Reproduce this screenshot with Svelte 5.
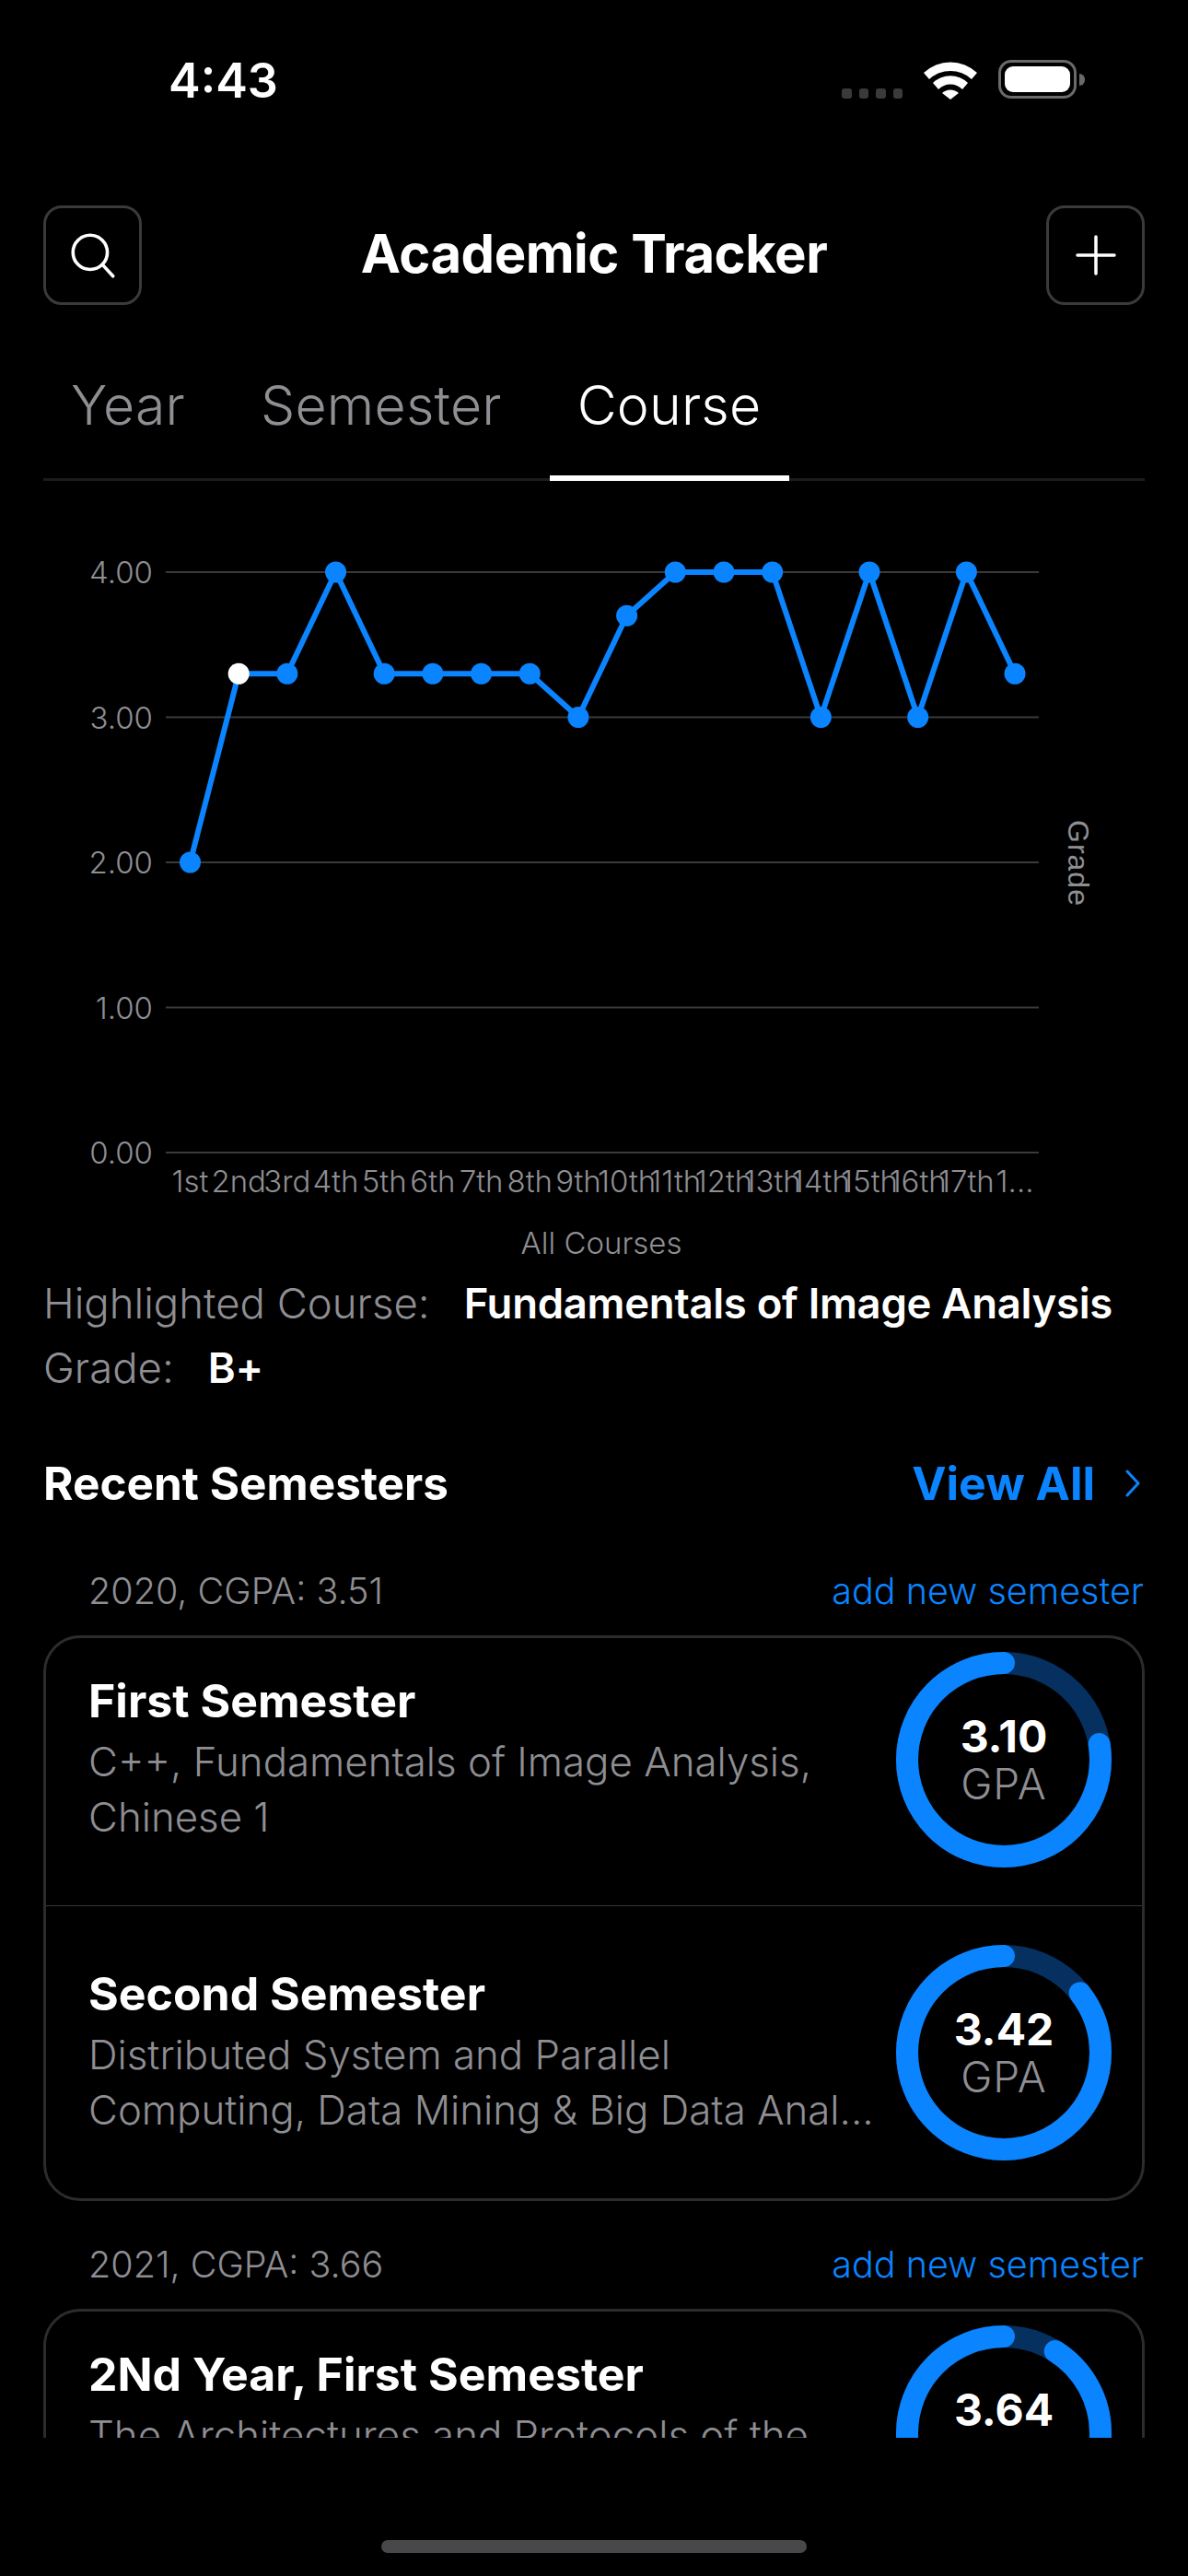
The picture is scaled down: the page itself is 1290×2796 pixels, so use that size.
<script lang="ts">
	type Course = { title: string; sub: string; gpa: number };
	type Section = { head: string; courses: Course[] };

	const grades = [2, 3.3, 3.3, 4, 3.3, 3.3, 3.3, 3.3, 3, 3.7, 4, 4, 4, 3, 4, 3, 4, 3.3];
	const labels = ['1st', '2nd', '3rd', '4th', '5th', '6th', '7th', '8th', '9th', '10th', '11th', '12th', '13th', '14th', '15th', '16th', '17th', '1...'];
	const ticks = [4, 3, 2, 1, 0];

	const xAt = (i: number) => 206.5 + i * 52.68;
	const yAt = (v: number) => 1251 - v * 157.5;
	const line = grades.map((g, i) => `${xAt(i)},${yAt(g)}`).join(' ');

	const sections: Section[] = [
		{
			head: '2020, CGPA: 3.51',
			courses: [
				{ title: 'First Semester', sub: 'C++, Fundamentals of Image Analysis, Chinese 1', gpa: 3.1 },
				{ title: 'Second Semester', sub: 'Distributed System and Parallel Computing, Data Mining & Big Data Anal...', gpa: 3.42 }
			]
		},
		{
			head: '2021, CGPA: 3.66',
			courses: [{ title: '2Nd Year, First Semester', sub: 'The Architectures and Protocols of the Internet, Machine Learning', gpa: 3.64 }]
		}
	];

	const ringLen = 2 * Math.PI * 105;
</script>

<div class="screen">
	<div class="status">
		<span class="time">4:43</span>
		<div class="status-icons">
			<div class="dots"><i></i><i></i><i></i><i></i></div>
			<svg class="wifi" width="58" height="43" viewBox="0 0 58 43">
				<path d="M0 14 A42 42 0 0 1 58 14 L52 21 A34 34 0 0 0 6 21 Z" fill="#fff" />
				<path d="M10 25 A27 27 0 0 1 48 25 L42 32 A18 18 0 0 0 16 32 Z" fill="#fff" />
				<path d="M20 36 A13 13 0 0 1 38 36 L29 43 Z" fill="#fff" />
			</svg>
			<div class="battery"><div class="battery-fill"></div></div>
			<div class="battery-nub"></div>
		</div>
	</div>

	<header class="header">
		<button class="icon-btn" aria-label="Search">
			<svg width="58" height="58" viewBox="0 0 56 56" fill="none" stroke="#fff" stroke-width="3.5" stroke-linecap="round">
				<circle cx="25" cy="25" r="18" />
				<path d="M38 38 L49 50" />
			</svg>
		</button>
		<h1>Academic Tracker</h1>
		<button class="icon-btn" aria-label="Add">
			<svg width="44" height="44" viewBox="0 0 44 44" fill="none" stroke="#fff" stroke-width="3.5" stroke-linecap="round">
				<path d="M22 2 V42 M2 22 H42" />
			</svg>
		</button>
	</header>

	<nav class="tabs">
		<span class="tab">Year</span>
		<span class="tab">Semester</span>
		<span class="tab active">Course</span>
	</nav>

	<svg class="chart" width="1290" height="861" viewBox="0 522 1290 861">
		{#each ticks as t}
			<line class="grid" x1="180" x2="1128" y1={yAt(t)} y2={yAt(t)} />
			<text class="axis" x="166" y={yAt(t) + 12} text-anchor="end">{t.toFixed(2)}</text>
		{/each}
		<polyline class="series" points={line} />
		{#each grades as g, i}
			<circle cx={xAt(i)} cy={yAt(g)} r="11.5" fill={i === 1 ? '#fff' : '#0a84ff'} />
		{/each}
		{#each labels as l, i}
			<text class="axis" x={xAt(i)} y="1294" text-anchor="middle">{l}</text>
		{/each}
		<text class="axis" x="653" y="1361" text-anchor="middle">All Courses</text>
		<text class="axis grade-axis" transform="translate(1160 890) rotate(90)">Grade</text>
	</svg>

	<div class="details">
		<div class="detail-row"><span class="detail-key">Highlighted Course:</span><b>Fundamentals of Image Analysis</b></div>
		<div class="detail-row"><span class="detail-key">Grade:</span><b>B+</b></div>
	</div>

	<div class="recent-head">
		<h2>Recent Semesters</h2>
		<div class="view-all">
			<span>View All</span>
			<svg width="18" height="30" viewBox="0 0 18 30" fill="none" stroke="#0a84ff" stroke-width="3" stroke-linecap="round" stroke-linejoin="round">
				<path d="M3 2 L15 15 L3 28" />
			</svg>
		</div>
	</div>

	<div class="list">
		{#each sections as s}
			<div class="section-head">
				<span class="section-title">{s.head}</span>
				<span class="add-link">add new semester</span>
			</div>
			<div class="card">
				{#each s.courses as c}
					<div class="row">
						<div class="row-text">
							<div class="row-title">{c.title}</div>
							<div class="row-sub">{c.sub}</div>
						</div>
						<div class="ring">
							<svg width="234" height="234" viewBox="0 0 234 234" fill="none">
								<circle cx="117" cy="117" r="105" stroke="#05305f" stroke-width="24" />
								<circle
									cx="117"
									cy="117"
									r="105"
									stroke="#0a84ff"
									stroke-width="24"
									stroke-linecap="round"
									transform="rotate(-90 117 117) scale(1 -1) translate(0 -234)"
									stroke-dasharray="{(c.gpa / 4) * ringLen} {ringLen}"
								/>
							</svg>
							<div class="ring-label">
								<span class="ring-value">{c.gpa.toFixed(2)}</span>
								<span class="ring-unit">GPA</span>
							</div>
						</div>
					</div>
				{/each}
			</div>
		{/each}
	</div>

	<div class="home-bar"><div class="home-pill"></div></div>
</div>

<style>
	:global(body) {
		background: #000;
	}
	.screen {
		width: 1290px;
		height: 2796px;
		background: #000;
		color: #fff;
		font-family: Inter, 'Open Sans', sans-serif;
		display: flex;
		flex-direction: column;
		overflow: hidden;
	}
	.status {
		height: 223px;
		box-sizing: border-box;
		padding: 60px 0 0 183px;
		display: flex;
		justify-content: space-between;
		flex-shrink: 0;
	}
	.time {
		font-size: 52px;
		line-height: 56px;
		font-weight: 600;
	}
	.status-icons {
		display: flex;
		align-items: flex-start;
		margin-top: 5px;
		padding-right: 112px;
	}
	.dots {
		display: flex;
		gap: 8px;
		margin-top: 31px;
		margin-right: 23px;
	}
	.dots i {
		width: 10.5px;
		height: 11px;
		border-radius: 3px;
		background: #3a3a3c;
	}
	.battery {
		width: 85px;
		height: 42px;
		box-sizing: border-box;
		margin-left: 23px;
		padding: 4px;
		border: 3px solid #6a6a6a;
		border-radius: 14px;
	}
	.battery-fill {
		height: 100%;
		background: #fff;
		border-radius: 9px;
	}
	.battery-nub {
		width: 6px;
		height: 13px;
		margin: 15px 0 0 3px;
		background: #6a6a6a;
		border-radius: 0 6px 6px 0;
	}
	.header {
		display: flex;
		align-items: center;
		justify-content: space-between;
		padding: 0 47px;
		flex-shrink: 0;
	}
	.header h1 {
		margin: 0 0 4px;
		font-size: 58px;
		font-weight: 700;
		line-height: 70px;
		letter-spacing: -0.5px;
	}
	.icon-btn {
		width: 107px;
		height: 108px;
		padding: 0;
		display: flex;
		align-items: center;
		justify-content: center;
		background: none;
		border: 3px solid #3a3a3c;
		border-radius: 20px;
	}
	.tabs {
		height: 191px;
		box-sizing: border-box;
		margin: 0 47px;
		display: flex;
		align-items: flex-end;
		gap: 21px;
		border-bottom: 3px solid #1c1c1e;
		flex-shrink: 0;
	}
	.tab {
		padding: 0 31px 40px 30px;
		margin-bottom: -3px;
		font-size: 59px;
		line-height: 72px;
		letter-spacing: 0.2px;
		font-weight: 300;
		color: #8e8e93;
		border-bottom: 6px solid transparent;
	}
	.tab.active {
		color: #fff;
		border-bottom-color: #fff;
	}
	.chart {
		display: block;
		flex-shrink: 0;
	}
	.grid {
		stroke: #3a3a3c;
		stroke-width: 2;
	}
	.series {
		fill: none;
		stroke: #0a84ff;
		stroke-width: 6;
	}
	.axis {
		font-size: 33px;
		font-weight: 300;
		fill: #8e8e93;
	}
	.grade-axis {
		font-family: 'Liberation Sans', sans-serif;
		font-size: 32px;
		font-weight: 400;
		letter-spacing: 1px;
	}
	.details {
		padding: 0 47px;
		margin-top: -3px;
		flex-shrink: 0;
	}
	.detail-row {
		display: flex;
		gap: 37px;
		font-size: 45.5px;
		line-height: 70px;
	}
	.detail-row b {
		font-weight: 600;
		letter-spacing: -0.3px;
	}
	.detail-key {
		color: #8e8e93;
		font-weight: 300;
	}
	.recent-head {
		margin-top: 60px;
		padding: 0 47px;
		display: flex;
		align-items: center;
		justify-content: space-between;
		flex-shrink: 0;
	}
	.recent-head h2 {
		margin: 0;
		font-size: 49.5px;
		line-height: 60px;
		font-weight: 700;
	}
	.view-all {
		display: flex;
		align-items: center;
		gap: 32px;
		font-size: 50px;
		line-height: 60px;
		font-weight: 700;
		color: #0a84ff;
		padding-right: 4px;
	}
	.list {
		height: 944px;
		margin: 61px 47px 0;
		padding-top: 1px;
		flex-shrink: 0;
		overflow: hidden;
	}
	.section-head {
		height: 50px;
		padding-left: 49px;
		display: flex;
		align-items: center;
		justify-content: space-between;
		font-size: 39.5px;
		font-weight: 300;
	}
	.section-title {
		color: #8e8e93;
	}
	.add-link {
		color: #0a84ff;
		padding-right: 1px;
	}
	.card {
		margin: 23px 0 44px;
		border: 3px solid #2c2c2e;
		border-radius: 40px;
	}
	.row {
		display: flex;
		justify-content: space-between;
		padding: 42px 33px 41px 46px;
		border-top: 1px solid #38383a;
	}
	.row:first-child {
		padding-top: 15px;
		border-top: 0;
	}
	.row-text {
		flex: 1;
		min-width: 0;
		padding-top: 23px;
		padding-right: 10px;
	}
	.row-title {
		font-size: 50px;
		line-height: 60px;
		font-weight: 700;
		margin-bottom: 7px;
	}
	.row-sub {
		font-size: 43.8px;
		line-height: 60px;
		font-weight: 300;
		color: #8e8e93;
		display: -webkit-box;
		-webkit-box-orient: vertical;
		-webkit-line-clamp: 2;
		overflow: hidden;
	}
	.ring {
		position: relative;
		width: 234px;
		height: 234px;
		flex-shrink: 0;
	}
	.ring svg {
		display: block;
	}
	.ring-label {
		position: absolute;
		inset: 0;
		display: flex;
		flex-direction: column;
		align-items: center;
		justify-content: center;
	}
	.ring-value {
		font-size: 48px;
		line-height: 52px;
		font-weight: 700;
	}
	.ring-unit {
		font-size: 46px;
		line-height: 50px;
		letter-spacing: 1px;
		font-weight: 300;
		color: #8e8e93;
	}
	.home-bar {
		flex: 1;
		display: flex;
		justify-content: center;
		padding-top: 111px;
	}
	.home-pill {
		width: 462px;
		height: 14px;
		border-radius: 7px;
		background: #48484a;
	}
</style>
